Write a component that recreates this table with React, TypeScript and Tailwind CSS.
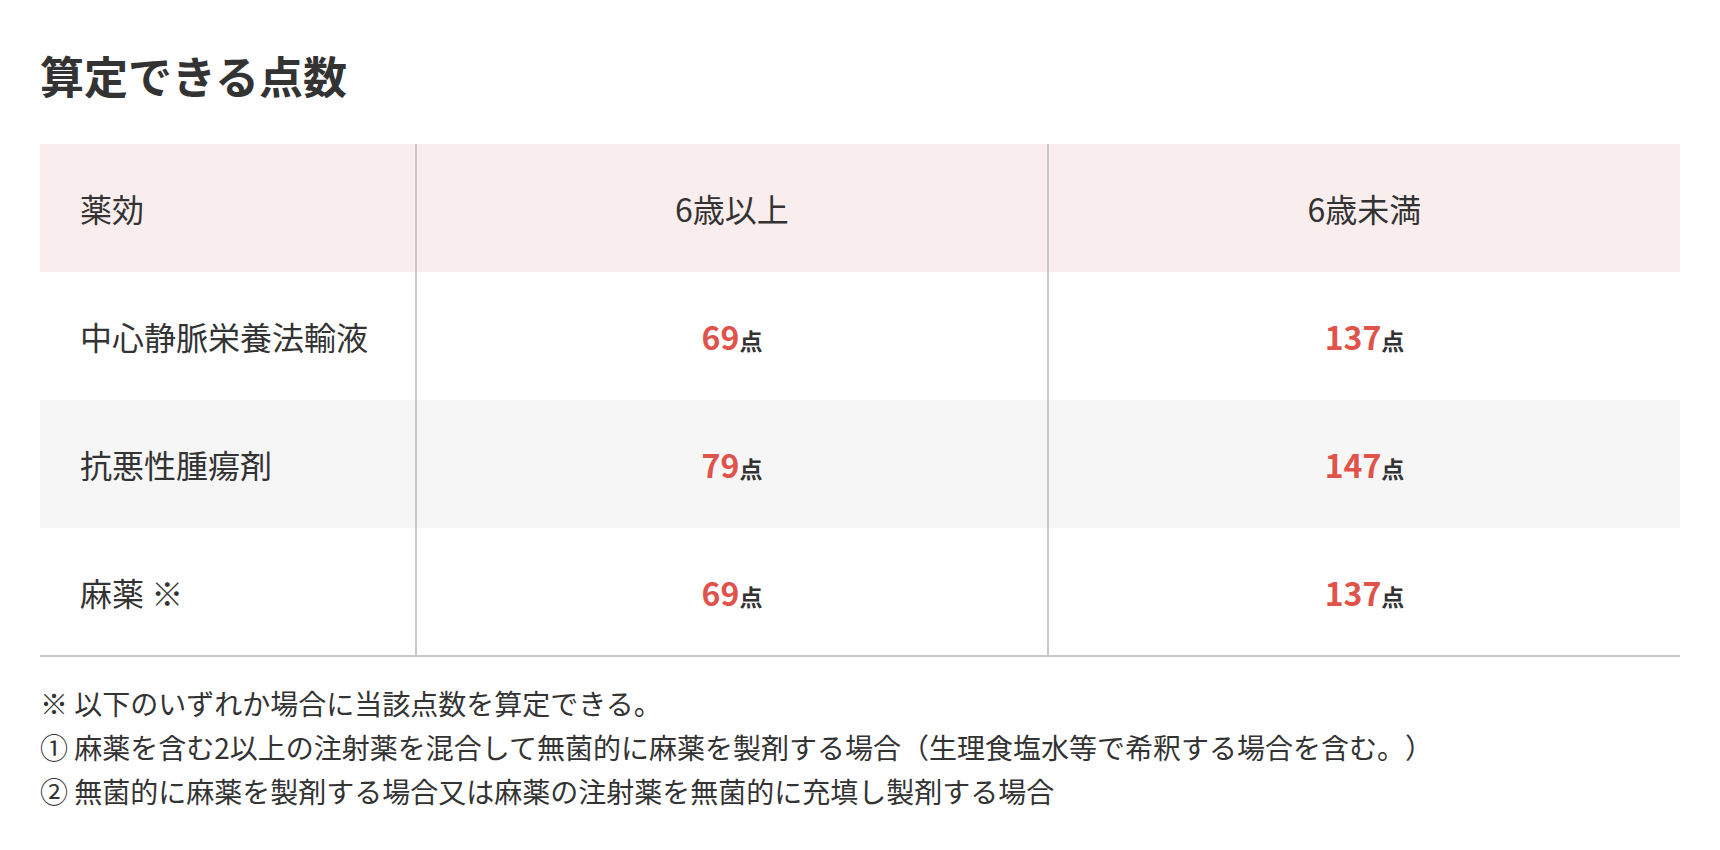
import React from "react";

const rows = [
  { name: "中心静脈栄養法輸液", a: "69", b: "137", bg: "bg-white" },
  { name: "抗悪性腫瘍剤", a: "79", b: "147", bg: "bg-[#f6f6f6]" },
  { name: "麻薬 ※", a: "69", b: "137", bg: "bg-white" },
];

function Points({ v }: { v: string }) {
  return (
    <span className="whitespace-nowrap">
      <span className="text-[32px] font-bold text-[#e0534a]">{v}</span>
      <span className="text-[23px] font-bold text-[#333333]">点</span>
    </span>
  );
}

export default function App() {
  return (
    <div
      className="w-[1720px] h-[850px] bg-white px-[40px] pt-[42px] text-[#333333] [text-spacing-trim:space-all]"
      style={{ fontFamily: '"Noto Sans CJK JP", "Noto Sans", sans-serif' }}
    >
      <h2 className="text-[44px] leading-[66px] font-bold text-[#333333]">算定できる点数</h2>
      <table className="mt-[36px] w-[1640px] table-fixed border-collapse">
        <colgroup>
          <col className="w-[376px]" />
          <col className="w-[632px]" />
          <col className="w-[632px]" />
        </colgroup>
        <thead>
          <tr className="bg-[#f9eeed] h-[128px]">
            <th className="border-r-2 border-[#c8c8c8] pl-[40px] text-left text-[32px] font-normal">薬効</th>
            <th className="border-r-2 border-[#c8c8c8] text-center text-[32px] font-normal">6歳以上</th>
            <th className="text-center text-[32px] font-normal">6歳未満</th>
          </tr>
        </thead>
        <tbody>
          {rows.map((r, i) => (
            <tr
              key={r.name}
              className={`${r.bg} h-[128px] ${i === rows.length - 1 ? "border-b-2 border-[#c8c8c8]" : ""}`}
            >
              <td className="border-r-2 border-[#c8c8c8] pl-[40px] text-left text-[32px]">{r.name}</td>
              <td className="border-r-2 border-[#c8c8c8] text-center">
                <Points v={r.a} />
              </td>
              <td className="text-center">
                <Points v={r.b} />
              </td>
            </tr>
          ))}
        </tbody>
      </table>
      <div className="mt-[24px] text-[28px] leading-[44px] text-[#333333]">
        <p>※ 以下のいずれか場合に当該点数を算定できる。</p>
        <p>① 麻薬を含む2以上の注射薬を混合して無菌的に麻薬を製剤する場合（生理食塩水等で希釈する場合を含む。）</p>
        <p>② 無菌的に麻薬を製剤する場合又は麻薬の注射薬を無菌的に充填し製剤する場合</p>
      </div>
    </div>
  );
}
